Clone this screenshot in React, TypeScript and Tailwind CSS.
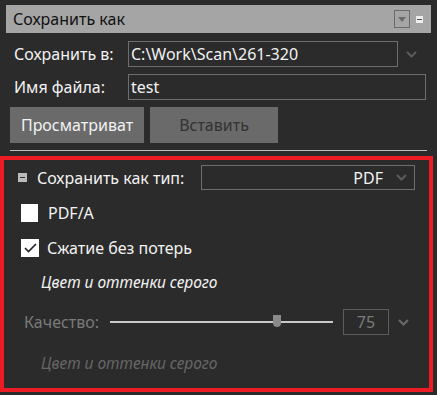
import React from "react";

function Chevron({ className = "" }: { className?: string }) {
  return (
    <svg width="11" height="7" viewBox="0 0 11 7" className={className}>
      <path d="M1 1 L5.5 5.5 L10 1" fill="none" stroke="currentColor" strokeWidth="2" />
    </svg>
  );
}

export default function App() {
  return (
    <div className="w-[437px] h-[395px] bg-[#2b2b2b] pt-[5px] text-[16px] leading-[24px] text-[#f2f2f2] font-['Noto_Sans',sans-serif]">
      {/* header */}
      <div className="mx-[6px] h-[28px] bg-[#a5a5a5] flex items-center pl-[7px] pr-[8px]">
        <span className="text-[16px] text-[#111] flex-1">Сохранить как</span>
        <div className="w-[16px] h-[18px] border border-[#6a6a6a] flex items-center justify-center text-[#6a6a6a]">
          <svg width="8" height="5" viewBox="0 0 8 5">
            <path d="M0 0 L8 0 L4 5 Z" fill="currentColor" />
          </svg>
        </div>
        <div className="ml-[6px] w-[7px] h-[7px] bg-[#eee] flex items-center justify-center">
          <div className="w-[5px] h-[1px] bg-[#555]" />
        </div>
      </div>

      {/* save location */}
      <div className="px-[10px] mt-[8px] flex flex-col gap-[7px]">
        <div className="flex items-center h-[26px]">
          <span className="w-[118px] pl-[4px]">Сохранить в:</span>
          <div className="w-[270px] h-[26px] border border-[#6e6e6e] flex items-center px-[2px]">
            C:\Work\Scan\261-320
          </div>
          <Chevron className="ml-[8px] text-[#5c5c5c]" />
        </div>
        <div className="flex items-center h-[26px]">
          <span className="w-[118px] pl-[4px]">Имя файла:</span>
          <div className="w-[298px] h-[26px] border border-[#6e6e6e] flex items-center px-[2px]">
            test
          </div>
        </div>
        <div className="flex gap-[6px]">
          <div className="w-[134px] h-[36px] bg-[#6a6a6a] flex items-center justify-center text-[#f2f2f2]">
            Просматриват
          </div>
          <div className="w-[128px] h-[36px] bg-[#6a6a6a] flex items-center justify-center text-[#333]">
            Вставить
          </div>
        </div>
        <div className="h-[1px] bg-[#bdbdbd]" />
      </div>

      {/* options box */}
      <div className="mt-[5px] w-[433px] h-[236px] border-[4px] border-[#ed1c24] px-[14px] pt-[5px]">
        <div className="flex items-center h-[25px]">
          <div className="w-[9px] h-[9px] bg-[#bbb] flex items-center justify-center mr-[10px]">
            <div className="w-[5px] h-[1px] bg-[#333]" />
          </div>
          <span className="w-[165px]">Сохранить как тип:</span>
          <div className="w-[216px] h-[25px] border border-[#6e6e6e] flex items-center justify-end pr-[7px]">
            <span className="mr-[13px]">PDF</span>
            <Chevron className="text-[#5c5c5c]" />
          </div>
        </div>
        <div className="flex items-center h-[24px] mt-[11px] pl-[3px]">
          <div className="w-[17px] h-[18px] bg-white mr-[10px]" />
          <span>PDF/A</span>
        </div>
        <div className="flex items-center h-[24px] mt-[11px] pl-[3px]">
          <div className="w-[18px] h-[18px] bg-white mr-[8px] flex items-center justify-center">
            <svg width="13" height="10" viewBox="0 0 13 10">
              <path d="M1 5 L4.5 8.5 L12 1" fill="none" stroke="#222" strokeWidth="1.6" />
            </svg>
          </div>
          <span>Сжатие без потерь</span>
        </div>
        <div className="mt-[10px] h-[24px] pl-[23px] italic text-[15.5px]">Цвет и оттенки серого</div>
        <div className="flex items-center h-[26px] mt-[15px] pl-[6px] text-[#7a7a7a]">
          <span className="w-[86px]">Качество:</span>
          <div className="relative w-[223px] h-[2px] bg-[#c8c8c8]">
            <div className="absolute left-[163px] top-[-6px] w-[8px] h-[12px] rounded-b-full rounded-t-[3px] bg-[#8a8a8a]" />
          </div>
          <div className="ml-[10px] w-[46px] h-[26px] border border-[#5c5c5c] flex items-center justify-center">
            75
          </div>
          <Chevron className="ml-[9px] text-[#6a6a6a]" />
        </div>
        <div className="mt-[16px] h-[24px] pl-[23px] italic text-[15.5px] text-[#666]">Цвет и оттенки серого</div>
      </div>
    </div>
  );
}
